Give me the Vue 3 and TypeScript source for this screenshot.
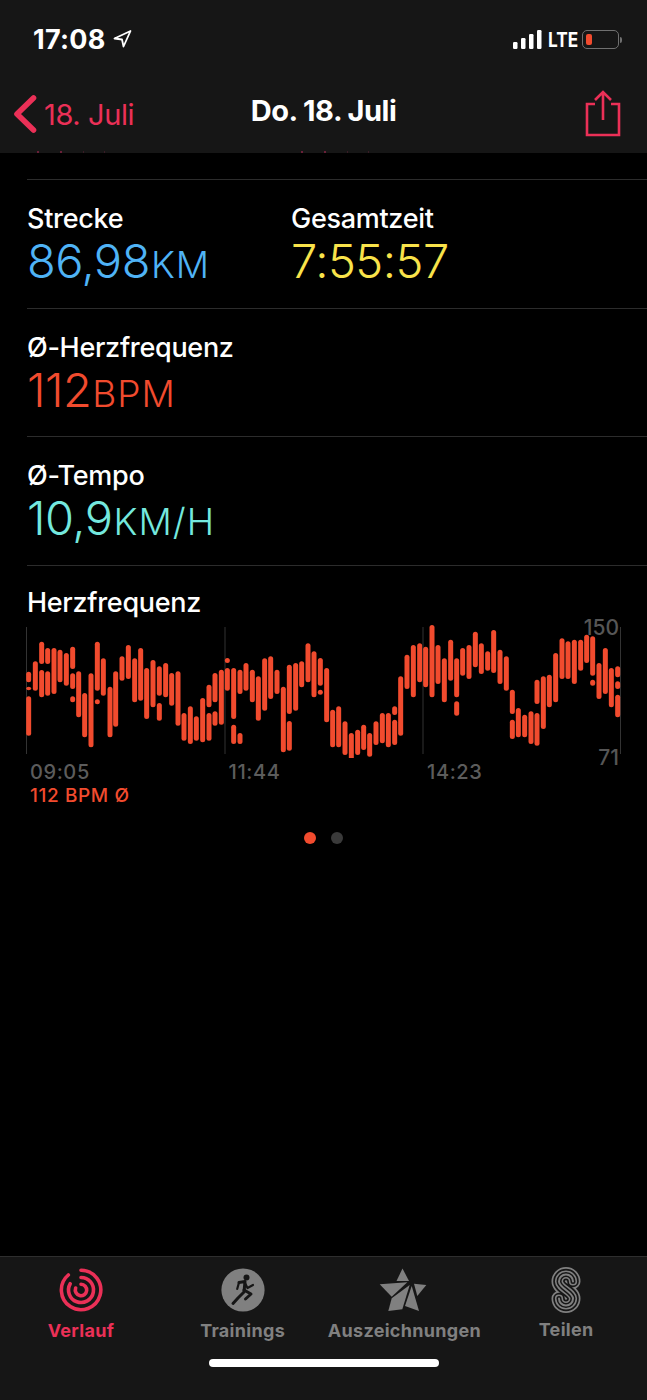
<script setup lang="ts">
type Seg = [number, number]
type Col = [number, ...Seg[]]

// columns read off the trace: [x, [top, bottom], ...] in crop pixels (3x)
const leftCols: Col[] = [
  [86, [158, 190], [203, 214], [232, 350]], [106, [127, 215]], [125, [68, 135], [153, 235]],
  [143, [87, 135], [157, 230]], [162, [87, 225]], [180, [92, 190]], [199, [102, 200]],
  [218, [83, 150], [163, 210], [232, 250]], [236, [157, 295]], [254, [222, 355]], [273, [163, 385]],
  [292, [68, 215], [241, 256]], [310, [118, 230]], [330, [203, 355]], [347, [157, 323]],
  [366, [112, 185]], [385, [78, 180]], [404, [118, 250]], [422, [87, 245]], [440, [147, 300]],
  [459, [123, 265]], [478, [142, 230], [252, 305]], [497, [132, 235]], [515, [162, 260]],
  [534, [157, 320]], [552, [282, 365]], [571, [262, 375]], [589, [292, 365]], [608, [237, 370]],
  [627, [197, 265], [282, 365]], [645, [162, 250], [277, 320]], [664, [152, 317]],
  [682, [117, 132], [147, 215]], [701, [147, 300], [317, 375]], [720, [152, 225], [342, 375]],
  [738, [132, 215]], [757, [152, 250]], [775, [172, 305]], [794, [118, 275]], [812, [112, 240]],
  [831, [152, 225]], [850, [203, 400]], [868, [137, 285], [306, 395]], [887, [132, 275]],
  [905, [127, 205]], [924, [73, 190]], [942, [97, 235]], [961, [117, 200], [212, 227]],
]
const rightCols: Col[] = [
  [14, [162, 325]], [32, [287, 400]], [50, [277, 400]], [69, [322, 423]], [88, [357, 438]],
  [107, [347, 423]], [125, [332, 408]], [143, [357, 428]], [162, [322, 393]], [181, [297, 388]],
  [199, [297, 400]], [218, [277, 303], [317, 393]], [236, [187, 365]], [255, [122, 225]],
  [274, [93, 250]], [293, [88, 205]], [311, [98, 220]], [330, [33, 250]], [348, [93, 210]],
  [367, [133, 265]], [386, [77, 200]], [404, [133, 250], [262, 305]], [422, [102, 185]],
  [441, [93, 195]], [460, [53, 160]], [478, [88, 180]], [497, [112, 170]], [515, [48, 177]],
  [534, [107, 210]], [553, [127, 230]], [571, [227, 300], [317, 375]], [589, [282, 370]],
  [608, [302, 370]], [627, [292, 390]], [645, [197, 270], [297, 395]], [664, [187, 345]],
  [682, [182, 280]], [701, [117, 265]], [720, [73, 195]], [738, [82, 195]], [757, [77, 210]],
  [776, [77, 170]], [794, [62, 147]], [812, [67, 185], [197, 215]], [831, [147, 255]],
  [850, [102, 240]], [868, [162, 280]], [887, [157, 190], [202, 225], [242, 310]],
]

const chartTop = 625

function toBars(cols: Col[], offX: number, offY: number) {
  const out: { x: number; y: number; h: number }[] = []
  for (const [cx, ...segs] of cols) {
    for (const [a, b] of segs) {
      out.push({ x: cx / 3 + offX - 2.5, y: a / 3 + offY - chartTop, h: (b - a) / 3 })
    }
  }
  return out
}

const bars = [...toBars(leftCols, 0, 620), ...toBars(rightCols, 322, 615)]
const gridLines = [26.5, 225, 423, 620.5]
const times = ['09:05', '11:44', '14:23']
const cutMarks = [0, 1]
</script>

<template>
  <div class="page">
    <header class="head">
      <div class="status">
        <div class="clock">
          <span>17:08</span>
          <svg width="19" height="18" viewBox="0 0 19 18" class="locArrow">
            <path d="M17.5 1 L1.5 8.5 L9 9.5 L10.5 16.5 Z" fill="none" stroke="#fff" stroke-width="1.8" stroke-linejoin="round" />
          </svg>
        </div>
        <div class="signal">
          <svg width="29" height="19" viewBox="0 0 29 19">
            <rect x="0" y="12" width="4.5" height="7" rx="1.2" fill="#fff" />
            <rect x="8" y="8" width="4.5" height="11" rx="1.2" fill="#fff" />
            <rect x="16" y="4" width="4.5" height="15" rx="1.2" fill="#fff" />
            <rect x="24" y="0" width="4.5" height="19" rx="1.2" fill="#fff" />
          </svg>
          <span class="lte">LTE</span>
          <div class="battery"><i></i></div>
          <div class="nub"></div>
        </div>
      </div>
      <nav class="navBar">
        <div class="back">
          <svg width="26" height="40" viewBox="0 0 26 40">
            <path d="M21.5 4 L5 20 L21.5 36" fill="none" stroke="#eb3057" stroke-width="5.6" stroke-linecap="round" stroke-linejoin="round" />
          </svg>
          <span>18. Juli</span>
        </div>
        <div class="title">Do. 18. Juli</div>
        <svg class="share" width="36" height="48" viewBox="0 0 36 48">
          <path d="M10 14 H2 V45 H34 V14 H26" fill="none" stroke="#eb3057" stroke-width="2.6" />
          <path d="M18 30 V2 M10 10 L18 2 L26 10" fill="none" stroke="#eb3057" stroke-width="2.6" />
        </svg>
      </nav>
      <div class="cutOff">
        <div v-for="m in cutMarks" :key="m" class="cutGroup">
          <i></i><i></i><b></b><b></b>
        </div>
      </div>
    </header>

    <main class="content">
      <section class="row first">
        <div class="metric wide">
          <div class="label">Strecke</div>
          <div class="value blue">86,98<small>KM</small></div>
        </div>
        <div class="metric">
          <div class="label">Gesamtzeit</div>
          <div class="value yellow">7:55:57</div>
        </div>
      </section>
      <section class="row">
        <div class="metric">
          <div class="label">Ø-Herzfrequenz</div>
          <div class="value red">112<small>BPM</small></div>
        </div>
      </section>
      <section class="row">
        <div class="metric">
          <div class="label">Ø-Tempo</div>
          <div class="value cyan">10,9<small>KM/H</small></div>
        </div>
      </section>
      <section class="row chartRow">
        <div class="label">Herzfrequenz</div>
        <div class="chart">
          <svg width="647" height="134" viewBox="0 0 647 134">
            <line v-for="g in gridLines" :key="g" :x1="g" :x2="g" y1="3" y2="130" stroke="#333" stroke-width="1" />
            <rect v-for="(b, i) in bars" :key="i" :x="b.x" :y="b.y" width="5" :height="b.h" rx="2.5" fill="#f14b2e" />
          </svg>
          <span class="axis top">150</span>
          <span class="axis bottom">71</span>
        </div>
        <div class="times">
          <span v-for="t in times" :key="t">{{ t }}</span>
        </div>
        <div class="avg">112 BPM Ø</div>
      </section>
      <div class="dots"><i class="on"></i><i></i></div>
    </main>

    <footer class="tabs">
      <div class="tabGrid">
        <div class="tab active">
          <svg width="44" height="44" viewBox="0 0 44 44">
            <g fill="none" stroke="#eb3057" stroke-width="3.6" stroke-linecap="round">
              <path d="M22 2.3 A19.7 19.7 0 1 1 9.3 7" />
              <path d="M22 9.5 A12.5 12.5 0 1 1 11.2 15.75" />
              <path d="M22 16.3 A5.7 5.7 0 1 1 16.64 20.05" />
            </g>
          </svg>
          <span>Verlauf</span>
        </div>
        <div class="tab">
          <svg width="44" height="44" viewBox="0 0 44 44">
            <circle cx="22" cy="22" r="21.6" fill="#808080" />
            <circle cx="25.5" cy="9.5" r="3" fill="#161616" />
            <g fill="none" stroke="#161616" stroke-linecap="round" stroke-linejoin="round">
              <path d="M18 14.5 L24 13.5 L23 24 L17 30 L12 35.5" stroke-width="3" />
              <path d="M23.5 14 L26.5 20 L32 17" stroke-width="2.2" />
              <path d="M18 14.5 L16.2 21" stroke-width="2.2" />
              <path d="M23 22 L30 26 L24.5 31" stroke-width="3" />
            </g>
          </svg>
          <span>Trainings</span>
        </div>
        <div class="tab">
          <svg width="70" height="44" viewBox="5 7 60 44" class="star">
            <g fill="#808080">
              <polygon points="33.5,7.5 27.5,20 40,20" />
              <polygon points="10.7,23.3 38.3,21.3 22.7,35.7" />
              <polygon points="22.7,37.3 40.7,24 33.3,48.3 19.3,50" />
              <polygon points="42.7,25 50,50 36,45" />
              <polygon points="45,22.7 57.3,24 48.3,35" />
            </g>
          </svg>
          <span>Auszeichnungen</span>
        </div>
        <div class="tab">
          <svg width="30" height="46" viewBox="0 0 30 46" class="shareRings">
            <g fill="none" stroke-linecap="round">
              <path id="ringS" d="M22 14.5 A7 7 0 0 0 8 14.5 C8 21 22 25 22 31.5 A7 7 0 0 1 8 31.5" stroke="#808080" stroke-width="15" />
              <path d="M22 14.5 A7 7 0 0 0 8 14.5 C8 21 22 25 22 31.5 A7 7 0 0 1 8 31.5" stroke="#161616" stroke-width="11.6" />
              <path d="M22 14.5 A7 7 0 0 0 8 14.5 C8 21 22 25 22 31.5 A7 7 0 0 1 8 31.5" stroke="#808080" stroke-width="8.2" />
              <path d="M22 14.5 A7 7 0 0 0 8 14.5 C8 21 22 25 22 31.5 A7 7 0 0 1 8 31.5" stroke="#161616" stroke-width="5" />
              <path d="M22 14.5 A7 7 0 0 0 8 14.5 C8 21 22 25 22 31.5 A7 7 0 0 1 8 31.5" stroke="#808080" stroke-width="2" />
            </g>
          </svg>
          <span>Teilen</span>
        </div>
      </div>
      <div class="homeBar"></div>
    </footer>
  </div>
</template>

<style scoped>
.page {
  width: 647px;
  height: 1400px;
  background: #000;
  display: flex;
  flex-direction: column;
  font-family: Inter, "Liberation Sans", sans-serif;
  color: #fff;
  overflow: hidden;
}

.head {
  position: relative;
  height: 153px;
  background: #161616;
  flex-shrink: 0;
}

.status {
  height: 80px;
  display: flex;
  justify-content: space-between;
  align-items: flex-start;
  padding: 26px 25px 0 33px;
  box-sizing: border-box;
}

.clock {
  display: flex;
  align-items: center;
  gap: 7px;
  font-size: 27px;
  font-weight: 700;
  line-height: 27px;
  letter-spacing: 0.3px;
}

.locArrow {
  margin-top: -2px;
}

.signal {
  display: flex;
  align-items: center;
  height: 29px;
  margin-top: -1px;
}

.lte {
  font-size: 20px;
  font-weight: 700;
  margin-left: 6px;
  width: 34px;
  transform: scaleX(0.86);
  transform-origin: left center;
}

.battery {
  width: 37px;
  height: 19px;
  border: 1.5px solid #707070;
  border-radius: 5px;
  box-sizing: border-box;
  padding: 3px;
  display: flex;
}

.battery i {
  width: 6px;
  background: #f14b2e;
  border-radius: 2px;
}

.nub {
  width: 2px;
  height: 6px;
  margin-left: 1px;
  background: #707070;
  border-radius: 0 2px 2px 0;
}

.navBar {
  display: flex;
  align-items: center;
  justify-content: space-between;
  height: 70px;
  padding: 0 26px 0 12px;
  position: relative;
}

.back {
  display: flex;
  align-items: center;
  gap: 6px;
  color: #eb3057;
  font-size: 29px;
  font-weight: 400;
  letter-spacing: -0.4px;
  margin-top: -2px;
}

.title {
  position: absolute;
  left: 0;
  right: 0;
  top: 13px;
  text-align: center;
  font-size: 29px;
  font-weight: 700;
  letter-spacing: -0.5px;
}

.share {
  margin-top: -2px;
  margin-right: 0;
}

.cutOff {
  position: absolute;
  left: 37px;
  bottom: 0;
  height: 2px;
  display: flex;
  gap: 196px;
}

.cutGroup {
  display: flex;
  gap: 21px;
  width: 68px;
}

.cutGroup i {
  width: 7px;
  background: #6a2038;
}

.cutGroup b {
  width: 2px;
  background: #3a1c26;
}

.content {
  flex: 1;
}

.row {
  margin-left: 27px;
  height: 128.5px;
  padding-top: 22px;
  box-sizing: border-box;
  border-top: 1px solid #2c2c2c;
  display: flex;
}

.first {
  margin-top: 26px;
}

.metric.wide {
  width: 264px;
}

.label {
  font-size: 27px;
  line-height: 34px;
  font-weight: 500;
  letter-spacing: -0.3px;
}

.value {
  font-size: 47px;
  line-height: 52px;
  margin-top: -1px;
  font-weight: 300;
  letter-spacing: -0.5px;
}

.value small {
  font-size: 37px;
  font-weight: 300;
  letter-spacing: 1px;
  margin-left: 1px;
}

.blue {
  color: #4fb3f6;
}

.yellow {
  color: #f9e34a;
}

.red {
  color: #f14b2e;
}

.cyan {
  color: #74e8de;
}

.chartRow {
  display: block;
  margin-left: 0;
  height: auto;
  padding-top: 21px;
  border-top: none;
  position: relative;
}

.chartRow::before {
  content: "";
  position: absolute;
  left: 27px;
  right: 0;
  top: 0;
  border-top: 1px solid #2c2c2c;
}

.chartRow .label {
  padding-left: 27px;
}

.chart {
  position: relative;
  height: 134px;
  margin-top: 4px;
}

.chart svg {
  display: block;
}

.axis {
  position: absolute;
  right: 28px;
  font-size: 21px;
  line-height: 24px;
  color: #565656;
  font-weight: 500;
}

.axis.top {
  top: -8px;
}

.axis.bottom {
  top: 122px;
}

.times {
  display: grid;
  grid-template-columns: repeat(3, 198.5px);
  padding-left: 30px;
  margin-top: 2px;
  font-size: 20px;
  line-height: 24px;
  font-weight: 500;
  color: #5c5c5c;
  letter-spacing: 0.6px;
}

.avg {
  padding-left: 30px;
  font-size: 19px;
  line-height: 24px;
  font-weight: 500;
  color: #f14b2e;
  letter-spacing: 0.6px;
}

.dots {
  display: flex;
  justify-content: center;
  gap: 15px;
  margin-top: 24px;
  padding-right: 0;
}

.dots i {
  width: 12px;
  height: 12px;
  border-radius: 50%;
  background: #3a3a3a;
}

.dots i.on {
  background: #f14b2e;
}

.tabs {
  height: 144px;
  flex-shrink: 0;
  background: #161616;
  border-top: 1px solid #2e2e2e;
  box-sizing: border-box;
  display: flex;
  flex-direction: column;
  align-items: center;
}

.tabGrid {
  width: 100%;
  display: grid;
  grid-template-columns: repeat(4, 1fr);
  padding-top: 11px;
}

.tab {
  display: flex;
  flex-direction: column;
  align-items: center;
  font-size: 18px;
  font-weight: 700;
  color: #808080;
  letter-spacing: 0.3px;
  white-space: nowrap;
}

.tab svg {
  height: 44px;
  display: block;
}

.tab span {
  margin-top: 7px;
  line-height: 24px;
}

.tab .shareRings {
  height: 46px;
  margin-bottom: -2px;
  margin-top: -1px;
}

.tab.active {
  color: #eb3057;
}

.homeBar {
  width: 230px;
  height: 8px;
  border-radius: 4px;
  background: #fff;
  margin-top: 16px;
}
</style>

<style>
html,
body {
  background: #000;
}
</style>
